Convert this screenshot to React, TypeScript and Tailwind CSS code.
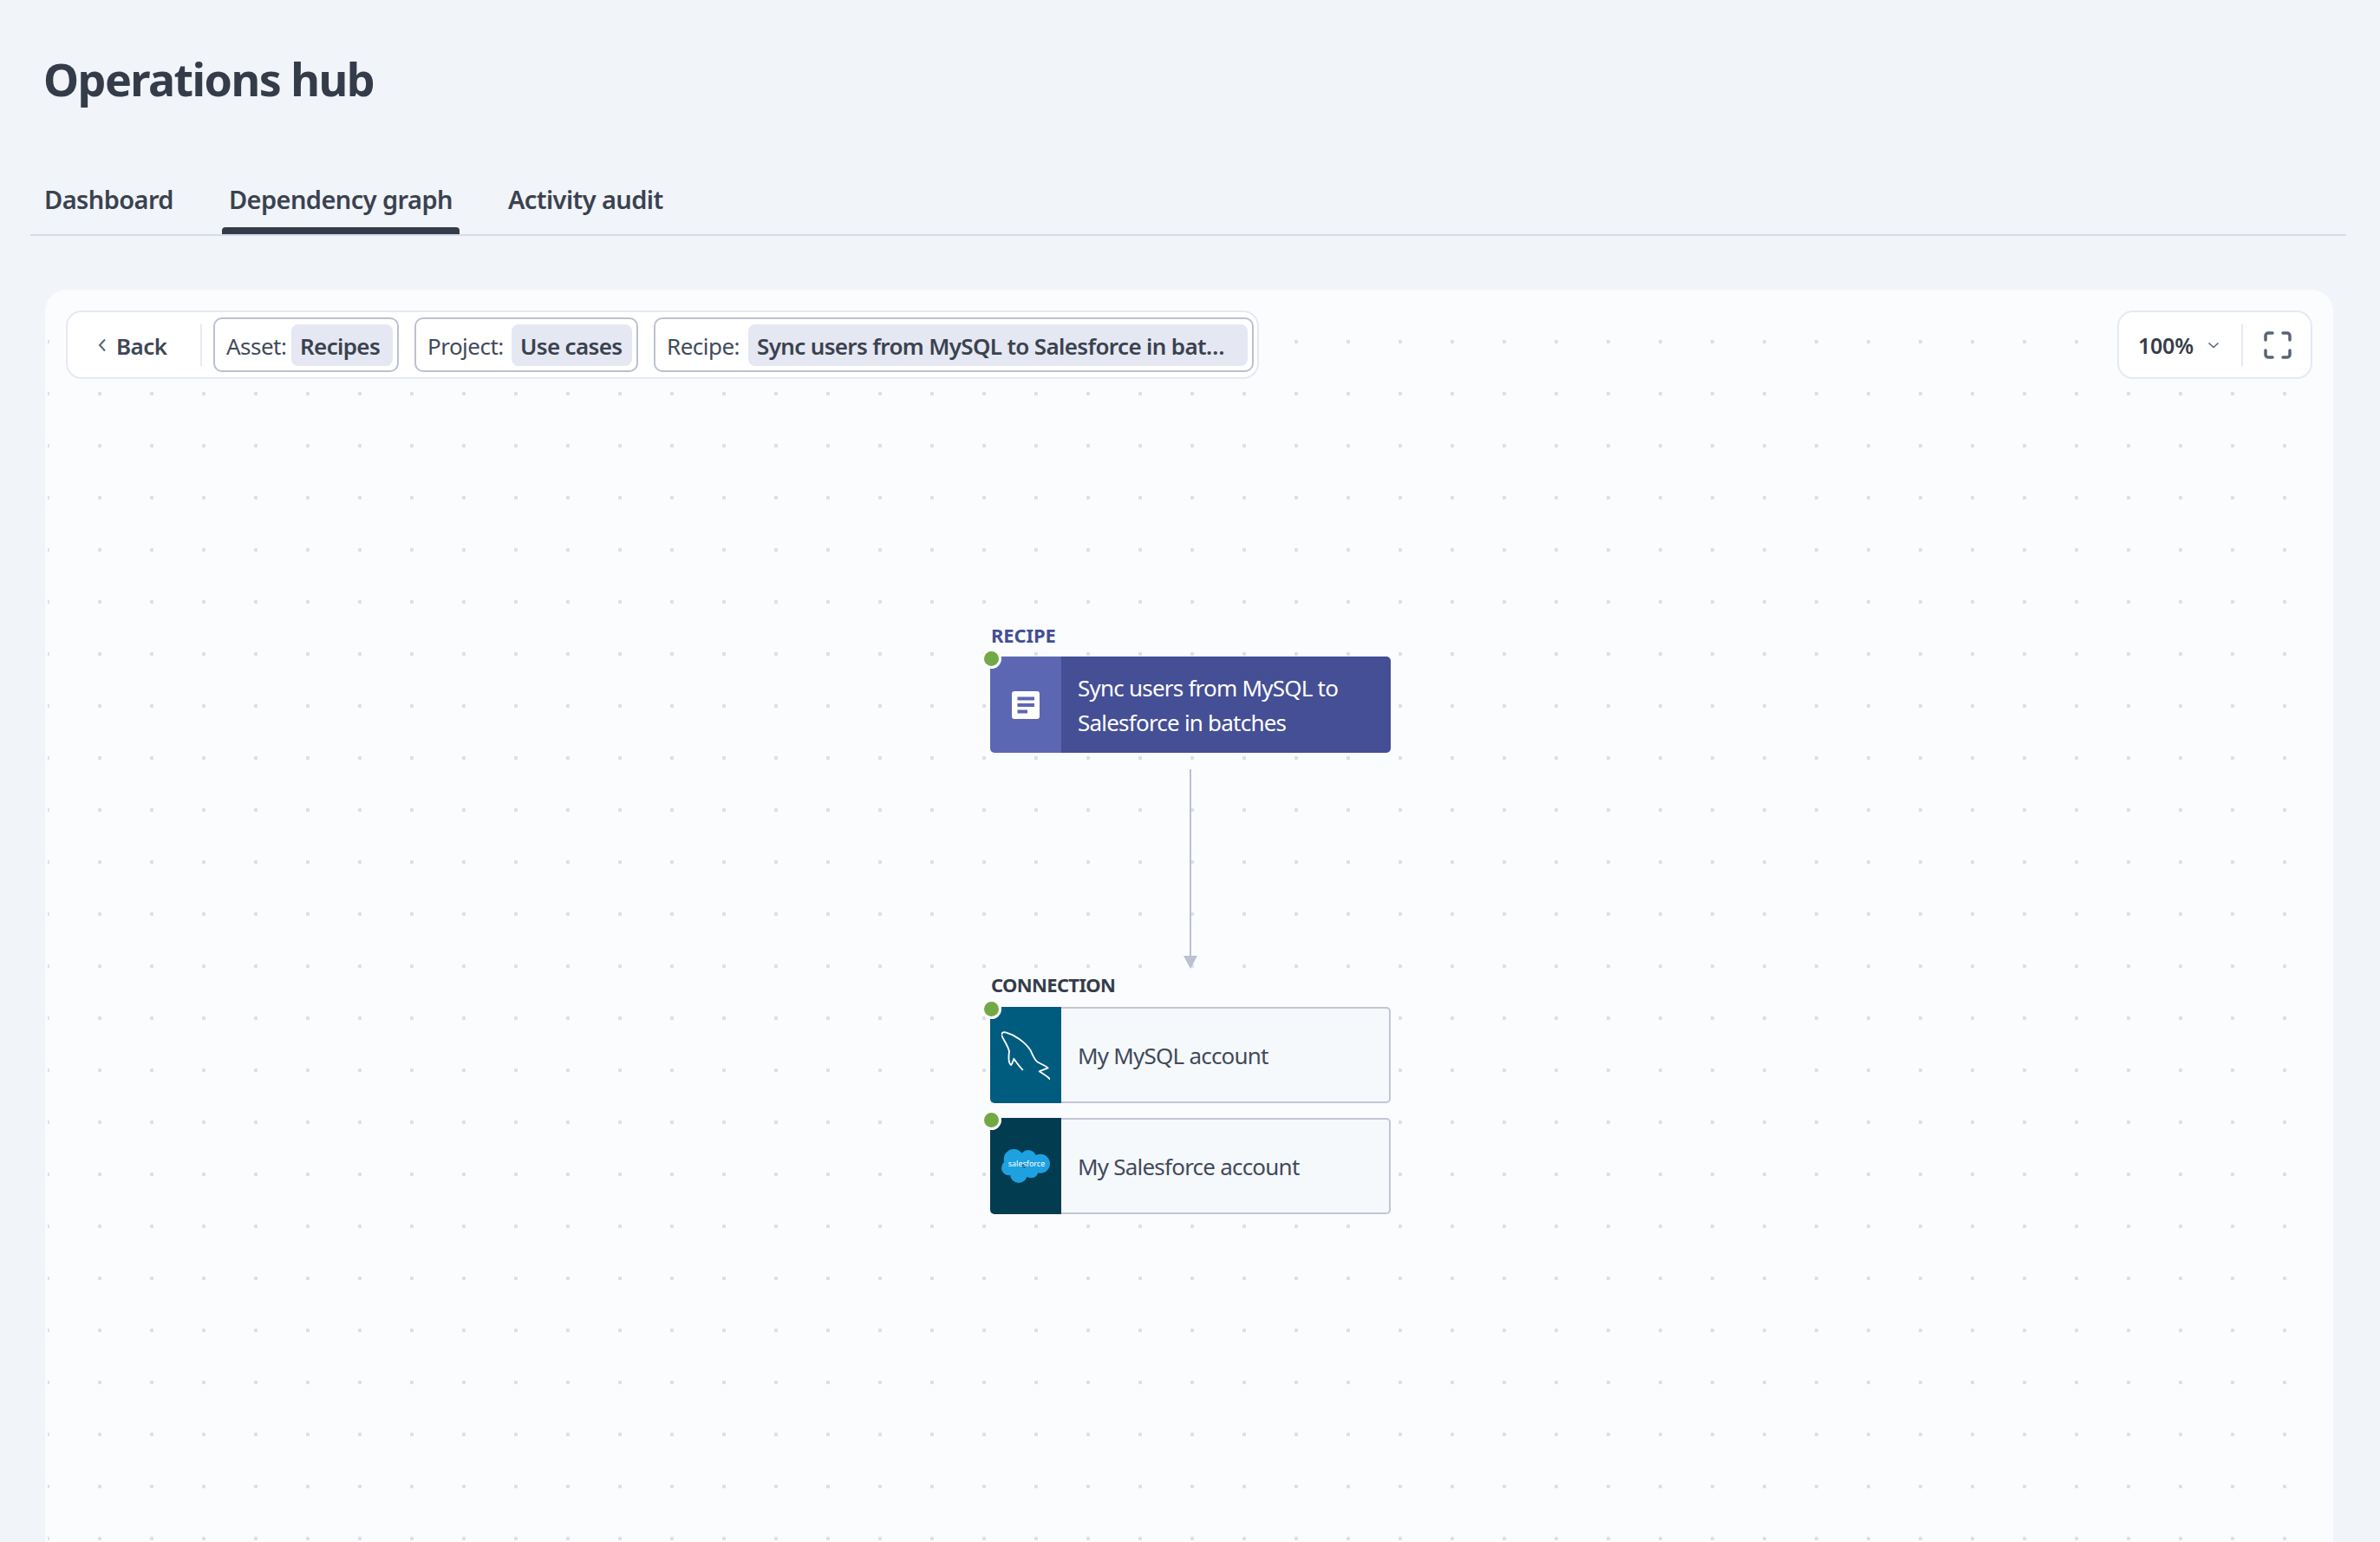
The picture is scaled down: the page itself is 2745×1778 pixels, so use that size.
export default function App() {
  return (
    <div className="h-[1778px] w-[2745px] overflow-hidden bg-[#f1f4f9] font-['Noto_Sans',sans-serif] text-[#3a4250]">
      <div className="flex h-[190px] items-start pl-[50px] pt-[53px]">
        <h1 className="text-[52px] leading-[76px] font-bold tracking-[-0.03em] text-[#353c49]">Operations hub</h1>
      </div>
      <div className="ml-[35px] mr-[39px] flex h-[82px] items-start gap-[64px] border-b-2 border-[#d6dbe6] pl-[16px] pt-[20px]">
        <Tab label="Dashboard" />
        <Tab label="Dependency graph" active />
        <Tab label="Activity audit" />
      </div>
      <div className="relative mt-[62px] ml-[52px] h-[1500px] w-[2639px] overflow-hidden rounded-t-[25px] bg-[#fbfcfe]">
        <Canvas />
        <div className="absolute left-[24px] top-[24px] flex h-[79px] w-[1376px] items-center rounded-[18px] border-2 border-[#e6e9f2] bg-white">
          <button className="flex h-[48px] w-[155px] items-center gap-[11px] border-r-2 border-[#e6e9f2] pl-[35px] text-[26px] font-semibold tracking-[-0.02em] text-[#3f4757]">
            <svg width="10" height="16" viewBox="0 0 10 16" fill="none"><path d="M8 1.5 2 8l6 6.5" stroke="#5a6478" strokeWidth="2" /></svg>
            <span className="pt-[3px]">Back</span>
          </button>
          <div className="ml-[13px] flex items-center gap-[18px]">
            <Chip label="Asset:" value="Recipes" w="w-[214px]" pw="w-[117px]" />
            <Chip label="Project:" value="Use cases" w="w-[258px]" pw="w-[139px]" />
            <Chip label="Recipe:" value="Sync users from MySQL to Salesforce in bat…" w="w-[692px]" pw="w-[576px]" />
          </div>
        </div>
        <div className="absolute left-[2390px] top-[24px] flex h-[79px] w-[225px] items-center rounded-[18px] border-2 border-[#e6e9f2] bg-white">
          <div className="flex h-[48px] w-[143px] items-center gap-[16px] border-r-2 border-[#e6e9f2] pl-[22px] text-[25px] font-semibold tracking-[-0.01em] text-[#353c49]">
            <span className="pt-[3px]">100%</span>
            <svg width="14" height="8" viewBox="0 0 14 8" fill="none"><path d="M1.5 1.5 7 6.5l5.5-5" stroke="#5a6478" strokeWidth="1.6" /></svg>
          </div>
          <svg className="ml-[24px]" width="32" height="32" viewBox="0 0 32 32" fill="none" stroke="#5a6478" strokeWidth="3.5" strokeLinecap="round" strokeLinejoin="round">
            <path d="M10 2H5a3 3 0 0 0-3 3v5M22 2h5a3 3 0 0 1 3 3v5M10 30H5a3 3 0 0 1-3-3v-5M22 30h5a3 3 0 0 0 3-3v-5" />
          </svg>
        </div>

        <svg className="absolute left-[1313px] top-[553px]" width="16" height="230" viewBox="0 0 16 230">
          <rect x="7" y="0" width="2" height="216" fill="#bcc1d1" />
          <path d="M0 215h16l-8 15z" fill="#bcc1d1" />
        </svg>

        <div className="absolute left-[1091px] top-[384px] text-[22px] leading-[28px] font-bold tracking-[-0.005em] text-[#434e94]">RECIPE</div>
        <Node top="top-[423px]" block="bg-[#5c67b3]" main="bg-[#454f95]" text="text-white" title={<>Sync users from MySQL to<br />Salesforce in batches</>} icon={<RecipeIcon />} />

        <div className="absolute left-[1091px] top-[787px] text-[22px] leading-[28px] font-bold tracking-[-0.03em] text-[#353c49]">CONNECTION</div>
        <Node top="top-[827px]" block="bg-[#005c7f]" main="bg-[#f6f9fc] border-y-2 border-r-2 border-[#c2c6d4]" text="text-[#424a5b]" title="My MySQL account" icon={<Dolphin />} />
        <Node top="top-[955px]" block="bg-[#023c50]" main="bg-[#f6f9fc] border-y-2 border-r-2 border-[#c2c6d4]" text="text-[#424a5b]" title="My Salesforce account" icon={<Cloud />} />
      </div>
    </div>
  );
}

function Tab({ label, active }: { label: string; active?: boolean }) {
  return (
    <div className="relative h-[60px] text-[29px] leading-[40px] font-semibold tracking-[-0.02em] text-[#3a4250]">
      {label}
      {active && <div className="absolute -left-[8px] -right-[8px] bottom-0 h-[8px] rounded-t-[4px] bg-[#353c49]" />}
    </div>
  );
}

function Chip({ label, value, w, pw }: { label: string; value: string; w: string; pw: string }) {
  return (
    <div className={`flex h-[63px] ${w} items-center justify-between rounded-[10px] border-2 border-[#bcc1d1] pl-[13px] pr-[5px]`}>
      <span className="pt-[3px] text-[26px] tracking-[-0.02em] text-[#424a5b]">{label}</span>
      <span className={`flex h-[48px] ${pw} items-center rounded-[8px] bg-[#e5e8f2] pl-[10px] pt-[3px] text-[26px] font-semibold tracking-[-0.025em] whitespace-nowrap text-[#3a4250]`}>{value}</span>
    </div>
  );
}

function Node({ top, block, main, text, title, icon }: { top: string; block: string; main: string; text: string; title: React.ReactNode; icon: React.ReactNode }) {
  return (
    <div className={`absolute left-[1090px] ${top} flex h-[111px] w-[462px]`}>
      <div className={`flex w-[82px] items-center justify-center rounded-l-[5px] ${block}`}>{icon}</div>
      <div className={`flex flex-1 items-center rounded-r-[5px] pt-[1px] pl-[19px] text-[26px] leading-[40px] tracking-[-0.03em] ${main} ${text}`}>
        <div>{title}</div>
      </div>
      <div className="absolute -left-[10px] -top-[9px] h-[23px] w-[23px] rounded-full border-[3.5px] border-white bg-[#73a847]" />
    </div>
  );
}

function Canvas() {
  return (
    <svg className="absolute left-[3px] top-[4px] h-[1496px] w-[2632px]">
      <defs>
        <pattern id="dots" width="60" height="60" patternUnits="userSpaceOnUse">
          <rect x="-2" y="54" width="4" height="4" fill="#dde0e9" />
          <rect x="58" y="54" width="4" height="4" fill="#dde0e9" />
        </pattern>
      </defs>
      <rect width="100%" height="100%" fill="url(#dots)" />
    </svg>
  );
}

function RecipeIcon() {
  return (
    <svg width="32" height="32" viewBox="0 0 32 32">
      <rect width="32" height="32" rx="3" fill="#fff" />
      <rect x="6.5" y="6.5" width="19.5" height="4" fill="#5c67b3" />
      <rect x="6.5" y="14" width="19.5" height="4" fill="#5c67b3" />
      <rect x="6.5" y="21.5" width="11.5" height="4" fill="#5c67b3" />
    </svg>
  );
}

function Dolphin() {
  return (
    <svg width="56" height="56" viewBox="105 265 168 168" fill="none" stroke="#fff" strokeWidth="5.5" strokeLinejoin="round" strokeLinecap="round">
      <path d="M178 398C165 385 155 370 148 360C145 370 142 378 138 382C128 375 130 350 132 335C128 315 112 295 106 280C104 270 112 266 122 270C150 278 185 300 205 330C215 350 218 365 232 373C245 380 258 385 266 392L236 404C248 412 262 420 272 430" />
    </svg>
  );
}

function Cloud() {
  return (
    <svg width="56" height="39" viewBox="105 165 168 117">
      <g fill="#1ea1e0">
        <circle cx="148" cy="200" r="35" />
        <circle cx="198" cy="196" r="28" />
        <circle cx="240" cy="215" r="33" />
        <circle cx="165" cy="252" r="30" />
        <circle cx="208" cy="240" r="25" />
        <circle cx="131" cy="230" r="26" />
      </g>
      <text x="192" y="226" textAnchor="middle" fill="#fff" fontSize="27" fontFamily="Noto Sans, sans-serif">salesforce</text>
    </svg>
  );
}
